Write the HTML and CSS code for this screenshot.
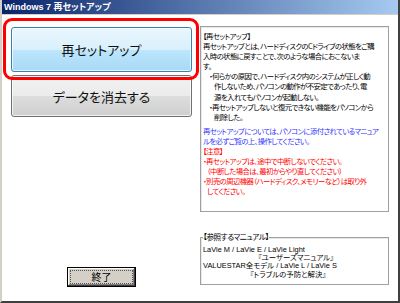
FILE: index.html
```html
<!DOCTYPE html>
<html lang="ja">
<head>
    <meta charset="UTF-8">
    <title>Windows 7 再セットアップ</title>
    <link rel="stylesheet" href="styles.css">
</head>
<body>
    <div class="window">
        <div class="titlebar">Windows 7 再セットアップ</div>
        <div class="content">
            <div class="left">
                <button class="big blue">再セットアップ</button>
                <button class="big gray">データを消去する</button>
                <button class="exit"><span>終了</span></button>
            </div>
            <div class="right">
                <div class="info">
                    <p>【再セットアップ】<br>
                    再セットアップとは、ハードディスクのCドライブの状態をご購<br>
                    入時の状態に戻すことで、次のような場合におこないま<br>
                    す。</p>
                    <p class="item">・何らかの原因で、ハードディスク内のシステムが正しく動<br>作しないため、パソコンの動作が不安定であったり、電<br>源を入れてもパソコンが起動しない。</p>
                    <p class="item">・再セットアップしないと復元できない機能をパソコンから<br>削除した。</p>
                    <p class="blue-text gap">再セットアップについては、パソコンに添付されているマニュア<br>ルを必ずご覧の上、操作してください。</p>
                    <p class="red-text">【注意】</p>
                    <p class="red-text note">・再セットアップは、途中で中断しないでください。<br>（中断した場合は、最初からやり直してください）</p>
                    <p class="red-text note">・別売の周辺機器（ハードディスク、メモリーなど）は取り外<br>してください。</p>
                </div>
                <fieldset class="manual">
                    <legend>【参照するマニュアル】</legend>
                    <div>LaVie M / LaVie E / LaVie Light</div>
                    <div class="title1">『ユーザーズマニュアル』</div>
                    <div>VALUESTAR全モデル / LaVie L / LaVie S</div>
                    <div class="title2">『トラブルの予防と解決』</div>
                </fieldset>
            </div>
        </div>
        <!-- annotation around the first button -->
        <div class="highlight"></div>
    </div>
</body>
</html>
```

FILE: styles.css
```css
html, body {
    margin: 0;
    padding: 0;
}
body {
    width: 400px;
    height: 303px;
    overflow: hidden;
    background-color: #fff;
    font-family: "Noto Sans CJK JP", sans-serif;
    font-feature-settings: "palt";
}
.window {
    position: relative;
    box-sizing: border-box;
    width: 400px;
    height: 303px;
    border-left: 2px solid #d4d0c8;
    border-right: 2px solid #404040;
    border-bottom: 2px solid #404040;
    display: flex;
    flex-direction: column;
}
.titlebar {
    height: 14px;
    line-height: 14px;
    padding-left: 2px;
    border-bottom: 1px solid #d4d0c8;
    background: linear-gradient(to right, #0a246a, #a6caf0);
    color: #fff;
    font-family: "Liberation Sans", "Noto Sans CJK JP", sans-serif;
    font-size: 9px;
    font-weight: bold;
    white-space: nowrap;
}
.content {
    flex: 1;
    display: grid;
    grid-template-columns: 181px 189px;
    column-gap: 8px;
    padding: 12px 0 14px 9px;
}
.left {
    display: flex;
    flex-direction: column;
    align-items: center;
}
.big {
    width: 181px;
    margin: 0;
    padding: 0;
    border: 1px solid #707070;
    border-radius: 3px;
    color: #111;
    font-family: inherit;
    font-feature-settings: "palt";
    font-size: 13px;
    box-shadow: inset 0 0 0 1px rgba(255,255,255,0.7);
}
.blue {
    height: 45px;
    border-color: #3c7fb1;
    background: linear-gradient(#eaf6fd 0%, #d9f0fc 50%, #bee6fd 50%, #a7d9f5 100%);
}
.gray {
    height: 42px;
    margin-top: 3px;
    background: linear-gradient(#f2f2f2 0%, #ebebeb 50%, #dddddd 50%, #cfcfcf 100%);
}
.exit {
    margin-top: auto;
    width: 69px;
    height: 20px;
    padding: 2px;
    border: 1px solid #000;
    background-color: #d4d0c8;
    box-shadow: inset -1px -1px #404040, inset 1px 1px #fff, inset -2px -2px #808080;
    font-family: inherit;
    font-size: 10px;
    color: #000;
}
.exit span {
    display: block;
    height: 100%;
    box-sizing: border-box;
    border: 1px dotted #555;
    line-height: 12px;
}
.right {
    margin-top: -1px;
    display: flex;
    flex-direction: column;
}
.info {
    box-sizing: border-box;
    height: 186px;
    padding: 4px 2px 0 2px;
    border: 1px solid #a0a0a0;
    box-shadow: inset 1px 1px #e8e8e8;
    font-size: 7.4px;
    letter-spacing: -0.6px;
    line-height: 10.1px;
    color: #000;
    white-space: nowrap;
    overflow: hidden;
}
.info p {
    margin: 0;
}
.item {
    padding-left: 11px;
    text-indent: -5px;
}
.gap {
    margin-top: 4px !important;
}
.blue-text {
    color: #3333ff;
}
.red-text {
    color: #ff0000;
}
.note {
    padding-left: 4px;
    text-indent: -4px;
}
.manual {
    margin: 20px 0 0 0;
    padding: 4px 2px 5px 2px;
    border: 1px solid #a0a0a0;
    box-shadow: inset 1px 1px #e8e8e8;
    font-family: "Liberation Sans", "Noto Sans CJK JP", sans-serif;
    font-size: 7.4px;
    line-height: 8.2px;
    white-space: nowrap;
}
.manual legend {
    padding: 0;
    margin-left: 0;
    font-family: "Noto Sans CJK JP", sans-serif;
    font-size: 7.6px;
    letter-spacing: -0.4px;
    line-height: 10px;
}
.title1 {
    padding-left: 55px;
}
.title2 {
    padding-left: 47px;
}
.highlight {
    position: absolute;
    left: 1px;
    top: 18px;
    width: 196px;
    height: 62px;
    box-sizing: border-box;
    border: 3px solid #ff0000;
    border-radius: 9px;
    pointer-events: none;
}
```
